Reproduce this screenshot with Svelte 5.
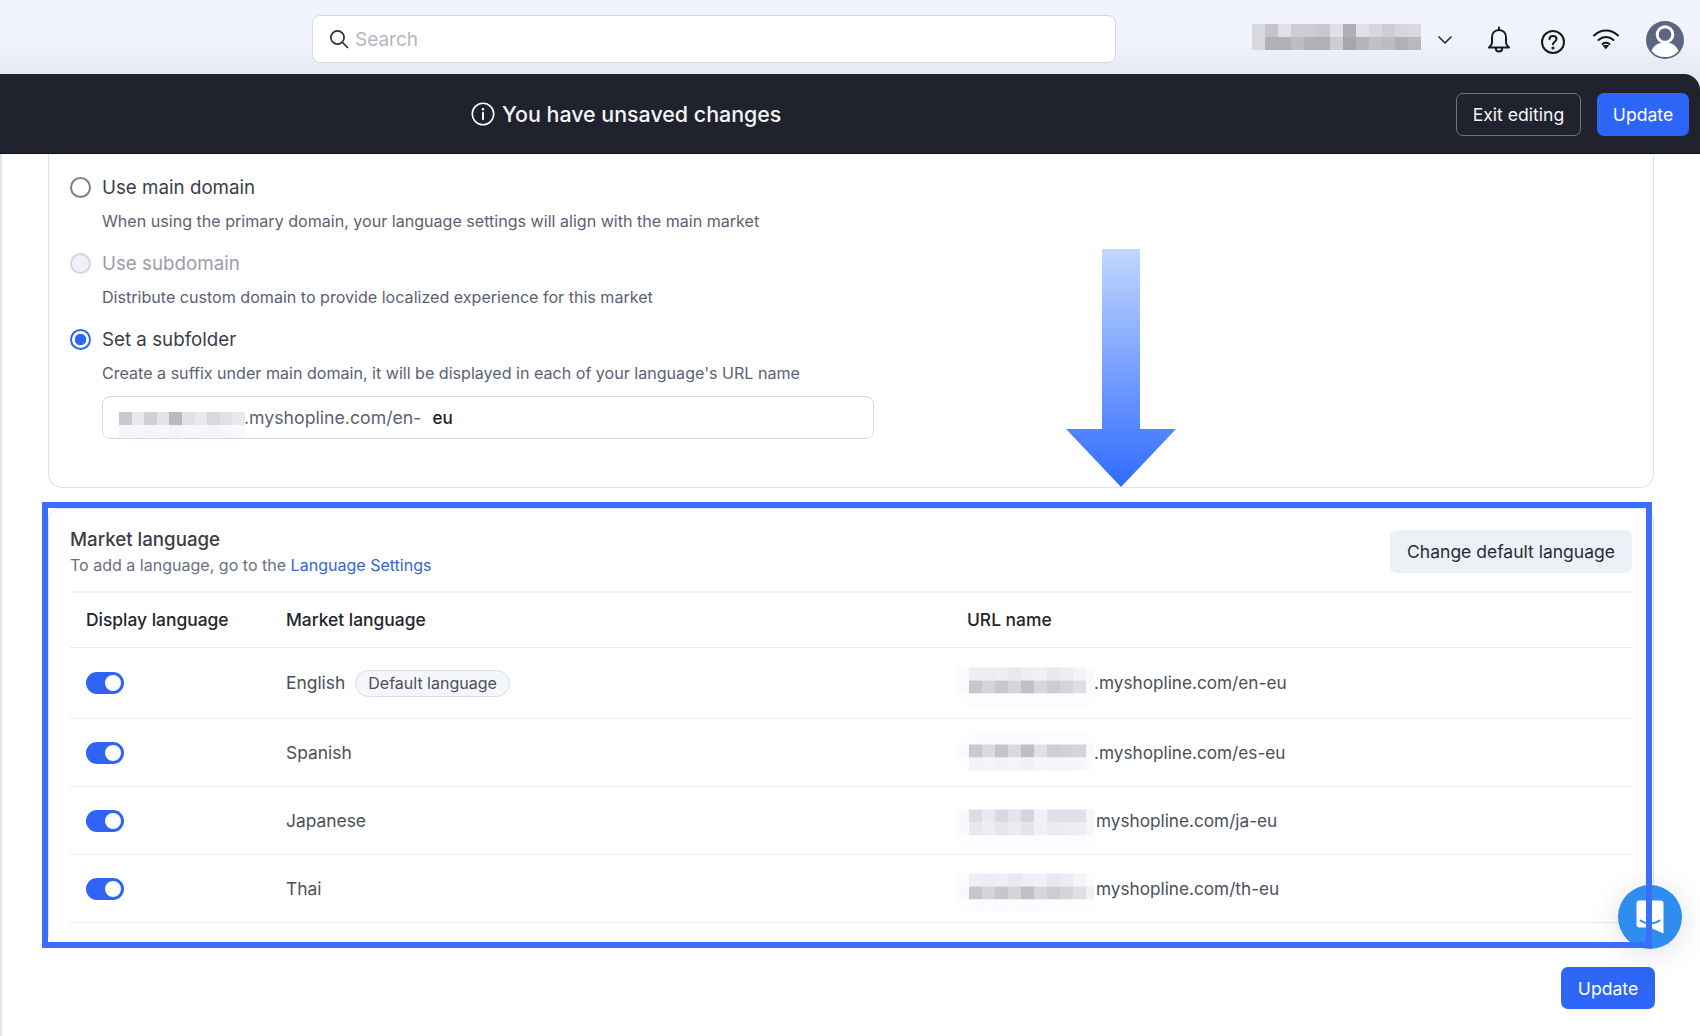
<script lang="ts">
  const g = (v: number) => `rgb(${v},${v},${v + 6})`;

  const accountCells = [
    [216, 196, 224, 204, 204, 200, 224, 174, 224, 214, 204, 214, 216],
    [216, 176, 176, 188, 176, 176, 204, 166, 180, 192, 188, 176, 184],
  ];
  const inputCells = [
    [200, 232, 208, 228, 184, 224, 232, 216, 224, 232],
    [244, 246, 244, 246, 242, 246, 246, 244, 246, 248],
  ];

  const languages = [
    {
      name: "English", isDefault: true, prefix: ".", url: "myshopline.com/en-eu", shift: 3.5,
      cells: [
        [250, 238, 236, 238, 232, 238, 240, 232, 236, 244, 250],
        [250, 198, 212, 198, 212, 192, 214, 204, 212, 222, 250],
        [254, 252, 252, 252, 252, 252, 252, 252, 252, 252, 254],
      ],
    },
    {
      name: "Spanish", isDefault: false, prefix: ".", url: "myshopline.com/es-eu", shift: -1.5,
      cells: [
        [254, 250, 250, 250, 250, 250, 252, 252, 252, 252, 254],
        [248, 200, 218, 196, 216, 190, 224, 206, 208, 212, 248],
        [254, 242, 244, 242, 244, 240, 246, 244, 244, 246, 252],
      ],
    },
    {
      name: "Japanese", isDefault: false, prefix: "", url: "myshopline.com/ja-eu", shift: 8.5,
      cells: [
        [248, 220, 232, 216, 228, 212, 240, 224, 224, 224, 244],
        [248, 232, 236, 230, 234, 228, 240, 234, 236, 238, 246],
        [254, 252, 252, 252, 252, 252, 252, 252, 252, 252, 254],
      ],
    },
    {
      name: "Thai", isDefault: false, prefix: "", url: "myshopline.com/th-eu", shift: 4.5,
      cells: [
        [250, 238, 236, 238, 232, 238, 240, 232, 236, 244, 250],
        [248, 198, 212, 198, 212, 192, 214, 204, 212, 222, 240],
        [254, 250, 252, 250, 252, 250, 252, 252, 252, 252, 254],
      ],
    },
  ];
</script>

{#snippet mosaic(rows: number[][], cls: string, shift = 0)}
  <span class="mosaic {cls}" style="translate: 0 {shift}px">
    {#each rows as row}
      <span class="mosaic-row">
        {#each row as v}<i style="background: {g(v)}"></i>{/each}
      </span>
    {/each}
  </span>
{/snippet}

<div class="page">
  <header class="head">
    <div class="topbar">
      <label class="search">
        <svg width="22" height="22" viewBox="0 0 22 22" fill="none" stroke="#2b2f38" stroke-width="1.7" stroke-linecap="round">
          <circle cx="9.5" cy="9.5" r="6.6" />
          <path d="M14.5 14.5 19.5 19.5" />
        </svg>
        <span>Search</span>
      </label>
      <div class="tools">
        {@render mosaic(accountCells, "account")}
        <svg class="chev" width="18" height="18" viewBox="0 0 18 18" fill="none" stroke="#2b2f38" stroke-width="1.7" stroke-linecap="round" stroke-linejoin="round">
          <path d="M3 6 9 12 15 6" />
        </svg>
        <svg class="bell" width="26" height="28" viewBox="0 0 26 28" fill="none" stroke="#16181d" stroke-width="2" stroke-linejoin="round" stroke-linecap="round">
          <path d="M13 1.5v2.6M13 4c-4.4 0-7 3.300-7 7.600v5.200c0 1.700-1.200 3.200-3 4.700h20c-1.800-1.500-3-3-3-4.700v-5.200C20 7.300 17.400 4 13 4Z" />
          <path d="M9.800 22c0 2 1.400 3.500 3.200 3.500s3.200-1.500 3.200-3.500" />
        </svg>
        <svg class="help" width="26" height="26" viewBox="0 0 26 26" fill="none" stroke="#16181d" stroke-width="2" stroke-linecap="round">
          <circle cx="13" cy="13" r="11" />
          <path d="M9.500 10.300c0-2 1.500-3.300 3.500-3.300s3.500 1.300 3.500 3.100c0 2.700-3.500 2.700-3.500 5.200" />
          <circle cx="13" cy="19" r=".6" fill="#16181d" />
        </svg>
        <svg class="wifi" width="28" height="22" viewBox="0 0 28 22" fill="none" stroke="#16181d" stroke-width="2" stroke-linecap="round">
          <path d="M2 6.500C9-.2 19-.2 26 6.500" />
          <path d="M6.500 11c4.500-4 10.500-4 15 0" />
          <path d="M10.500 15c2.200-1.600 4.800-1.600 7 0" fill="none" />
          <path d="M11.500 16.500h5L14 19.500Z" fill="#16181d" stroke-width="1" stroke-linejoin="round" />
        </svg>
        <svg class="avatar" width="38" height="38" viewBox="0 0 38 38">
          <circle cx="19" cy="19" r="19" fill="#5b6781" />
          <circle cx="19" cy="13.500" r="7.800" fill="none" stroke="#fff" stroke-width="3" />
          <path d="M5.500 30c2-6 7.500-8.500 13.500-8.500S30.500 24 32.500 30A17 17 0 0 1 19 36 17 17 0 0 1 5.500 30Z" fill="#fff" />
        </svg>
      </div>
    </div>
    <div class="savebar">
      <div class="notice">
        <svg width="24" height="24" viewBox="0 0 24 24" fill="none" stroke="#fff" stroke-width="1.600" stroke-linecap="round">
          <circle cx="12" cy="12" r="10.700" />
          <path d="M12 10.800v6.400" stroke-width="1.900" />
          <circle cx="12" cy="7.300" r=".5" fill="#fff" />
        </svg>
        <span>You have unsaved changes</span>
      </div>
      <button class="btn ghost">Exit editing</button>
      <button class="btn primary">Update</button>
    </div>
  </header>

  <main>
    <section class="card domains">
      <div class="option">
        <div class="opt-label"><span class="radio"></span>Use main domain</div>
        <p>When using the primary domain, your language settings will align with the main market</p>
      </div>
      <div class="option disabled">
        <div class="opt-label"><span class="radio"></span>Use subdomain</div>
        <p>Distribute custom domain to provide localized experience for this market</p>
      </div>
      <div class="option">
        <div class="opt-label"><span class="radio checked"></span>Set a subfolder</div>
        <p>Create a suffix under main domain, it will be displayed in each of your language's URL name</p>
        <div class="suffix">
          {@render mosaic(inputCells, "in-input")}
          <span class="suffix-text">.myshopline.com/en-</span>
          <b>eu</b>
        </div>
      </div>
    </section>

    <section class="card languages">
      <div class="lang-head">
        <div>
          <h3>Market language</h3>
          <p>To add a language, go to the <a href="#settings">Language Settings</a></p>
        </div>
        <button class="btn soft">Change default language</button>
      </div>
      <div class="row th">
        <span>Display language</span>
        <span>Market language</span>
        <span>URL name</span>
      </div>
      {#each languages as lang}
        <div class="row">
          <span class="toggle"><i></i></span>
          <span class="name">
            {lang.name}
            {#if lang.isDefault}<em class="pill">Default language</em>{/if}
          </span>
          <span class="url">
            {@render mosaic(lang.cells, "in-row", lang.shift)}
            <span class:nodot={!lang.prefix}>{lang.prefix}{lang.url}</span>
          </span>
        </div>
      {/each}
    </section>

    <div class="foot">
      <button class="btn primary bottom">Update</button>
    </div>
  </main>

  <!-- floating help launcher -->
  <div class="launcher">
    <svg width="28" height="34" viewBox="0 0 28 34">
      <path d="M3.500.5h21a3 3 0 0 1 3 3V33.500L14 27.500H3.500a3 3 0 0 1-3-3V3.500a3 3 0 0 1 3-3Z" fill="#fff" />
      <path d="M4.500 20.500c5 3.600 14 3.600 19 0" fill="none" stroke="#2f8df0" stroke-width="2" stroke-linecap="round" />
    </svg>
  </div>

  <!-- annotation drawn on top of the screenshot -->
  <svg class="arrow" width="112" height="244" viewBox="0 0 112 244">
    <defs>
      <linearGradient id="arrowFill" x1="0" y1="0" x2="0" y2="1">
        <stop offset="0" stop-color="#c2d7ff" />
        <stop offset="1" stop-color="#2f6bff" />
      </linearGradient>
    </defs>
    <path d="M37 3h38v180h36L56 241 1 183h36Z" fill="url(#arrowFill)" />
  </svg>
  <div class="highlight"></div>
</div>

<style>
  :global(body) {
    background: #fff;
    font-family: Inter, "Liberation Sans", sans-serif;
    color: #2b2f38;
  }
  .page {
    position: relative;
    height: 1036px;
    overflow: hidden;
    display: flex;
    flex-direction: column;
  }
  .head {
    background: linear-gradient(#f2f4fd 0, #f1f3fc 40px, #e6e8f2 74px, #e6e8f2 100%);
  }
  .topbar {
    height: 74px;
    box-sizing: border-box;
    display: flex;
    align-items: center;
    padding-left: 312px;
    padding-right: 16px;
  }
  .search {
    width: 804px;
    height: 48px;
    margin-top: 4px;
    box-sizing: border-box;
    display: flex;
    align-items: center;
    gap: 5px;
    padding-left: 15px;
    background: #fff;
    border: 1px solid #d5d8e6;
    border-radius: 8px;
    font-size: 19px;
    color: #b4b7c2;
  }
  .tools {
    margin-left: auto;
    margin-top: 5px;
    display: flex;
    align-items: center;
  }
  .mosaic {
    display: inline-flex;
    flex-direction: column;
    flex: none;
    filter: blur(0.5px);
  }
  .mosaic-row {
    display: flex;
    height: 13px;
  }
  .mosaic-row i {
    flex: none;
    width: 13px;
    height: 13px;
  }
  .account {
    margin-top: -5px;
  }
  .chev {
    margin-left: 15px;
  }
  .bell {
    margin-left: 32px;
  }
  .help {
    margin-left: 28px;
    margin-top: 4px;
  }
  .wifi {
    margin-left: 26px;
  }
  .avatar {
    margin-left: 26px;
  }
  .savebar {
    height: 80px;
    box-sizing: border-box;
    display: flex;
    align-items: center;
    padding: 2px 11px 0 471px;
    background: #20232d;
    border-top-right-radius: 16px;
    border-bottom: 1px solid #0d0e13;
  }
  .notice {
    display: flex;
    align-items: center;
    gap: 7px;
    margin-right: auto;
    margin-top: -2px;
    font-size: 21.400px;
    font-weight: 500;
    color: #f4f5f7;
  }
  .btn {
    font: inherit;
    font-size: 17.600px;
    height: 43px;
    box-sizing: border-box;
    border-radius: 7px;
    border: 1px solid transparent;
    padding: 0;
  }
  .ghost {
    width: 125px;
    margin-right: 16px;
    background: transparent;
    border-color: #71747e;
    color: #f4f5f7;
  }
  .primary {
    width: 92px;
    background: #2d66f6;
    color: #fff;
  }
  main {
    flex: 1;
    display: flex;
    flex-direction: column;
    gap: 20px;
    padding: 0 46px 0 46px;
    border-left: 2px solid #e4e4ec;
  }
  .card {
    background: #fff;
    border: 1px solid #dfe1e8;
    border-radius: 12px;
    padding: 0 21px;
  }
  .domains {
    border-top: 0;
    border-radius: 0 0 14px 14px;
    padding-top: 21px;
    padding-bottom: 48px;
  }
  .option {
    margin-bottom: 18px;
    color: #5b6273;
    font-size: 16.080px;
  }
  .option:last-child {
    margin-bottom: 0;
  }
  .opt-label {
    display: flex;
    align-items: center;
    gap: 11px;
    height: 24px;
    margin-bottom: 10px;
    font-size: 18.750px;
    color: #3a3f4b;
  }
  .option p {
    margin: 0 0 0 32px;
    line-height: 24px;
  }
  .radio {
    width: 21px;
    height: 21px;
    box-sizing: border-box;
    border: 2px solid #7a7f92;
    border-radius: 50%;
    background: #fff;
  }
  .radio.checked {
    border-color: #2d66f6;
    background: radial-gradient(circle, #2d66f6 0 5.500px, #fff 6px);
  }
  .disabled .opt-label {
    color: #9a9eab;
  }
  .disabled .radio {
    border-color: #d3d6e2;
    background: #eff1f7;
  }
  .suffix {
    margin: 11px 0 0 32px;
    width: 772px;
    height: 43px;
    box-sizing: border-box;
    display: flex;
    align-items: center;
    padding-left: 16px;
    border: 1px solid #d8dae3;
    border-radius: 8px;
    font-size: 17.700px;
  }
  .in-input {
    width: 126px;
    margin-top: 14px;
  }
  .in-input :global(.mosaic-row i) {
    width: 12.600px;
  }
  .suffix-text {
    margin-left: -1px;
    color: #5b6273;
  }
  .suffix b {
    margin-left: 11px;
    font-weight: 500;
    font-size: 17px;
    color: #1d2028;
  }
  .languages {
    height: 437px;
    box-sizing: border-box;
    padding-top: 19px;
  }
  .lang-head {
    display: flex;
    align-items: center;
    justify-content: space-between;
    padding-bottom: 14px;
    border-bottom: 2px solid #eef0f4;
  }
  h3 {
    margin: 0 0 1px;
    font-size: 18.700px;
    line-height: 24px;
    font-weight: 500;
    color: #3a3e47;
  }
  .lang-head p {
    margin: 0;
    font-size: 16.050px;
    line-height: 24px;
    color: #6a7080;
  }
  .lang-head a {
    color: #3565d8;
    text-decoration: none;
  }
  .soft {
    width: 242px;
    background: #edf0f6;
    color: #282c36;
    font-size: 17.500px;
    margin-top: -2px;
  }
  .row {
    display: grid;
    grid-template-columns: 200px 681px 1fr;
    align-items: center;
    padding: 21.500px 16px;
    border-bottom: 1px solid #e9ebf0;
    font-size: 17.400px;
    line-height: 24px;
    color: #4b4f5a;
  }
  .row.th {
    padding: 15px 16px;
    font-weight: 500;
    color: #23262e;
    font-size: 17.400px;
  }
  .toggle {
    position: relative;
    width: 38px;
    height: 22px;
    border-radius: 11px;
    background: #2f63f3;
  }
  .toggle i {
    position: absolute;
    top: 3px;
    right: 3px;
    width: 16px;
    height: 16px;
    border-radius: 50%;
    background: #fff;
  }
  .name {
    display: flex;
    align-items: center;
    gap: 10px;
  }
  .pill {
    height: 27px;
    box-sizing: border-box;
    display: inline-flex;
    align-items: center;
    padding: 0 12px;
    border: 1px solid #d8dae6;
    border-radius: 14px;
    background: #f5f6fb;
    font-style: normal;
    font-size: 16px;
    color: #4b4f5a;
  }
  .url {
    display: flex;
    align-items: center;
    height: 24px;
    font-size: 17.200px;
  }
  .in-row {
    margin-left: -10px;
    margin-block: -20px;
    width: 137px;
  }
  .in-row :global(.mosaic-row i:first-child) {
    width: 12px;
  }
  .in-row :global(.mosaic-row i:last-child) {
    width: 8px;
  }
  .nodot {
    margin-left: 2px;
  }
  .foot {
    display: flex;
    justify-content: flex-end;
    margin-top: 2px;
    margin-right: -1px;
  }
  .bottom {
    width: 94px;
    height: 42px;
  }
  .launcher {
    position: absolute;
    left: 1618px;
    top: 885px;
    width: 64px;
    height: 64px;
    display: flex;
    align-items: center;
    justify-content: center;
    border-radius: 50%;
    background: #2f8df0;
    box-shadow: 0 4px 30px rgba(20, 30, 60, 0.14);
  }
  .arrow {
    position: absolute;
    left: 1065px;
    top: 246px;
  }
  .highlight {
    position: absolute;
    left: 42px;
    top: 502px;
    width: 1610px;
    height: 446px;
    box-sizing: border-box;
    border: 6px solid #3a6eff;
  }
</style>
